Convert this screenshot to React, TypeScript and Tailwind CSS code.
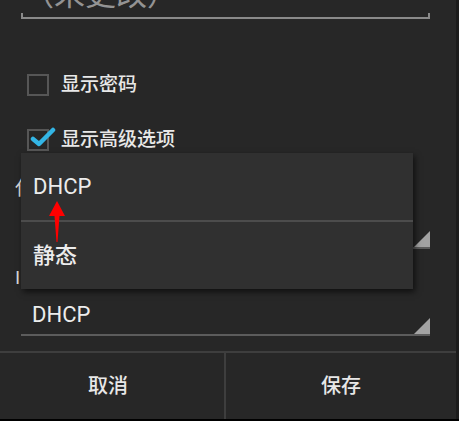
import React from "react"

const font = { fontFamily: "Roboto, 'Noto Sans CJK SC', sans-serif" }

function Checkbox({ checked, label }: { checked?: boolean; label: string }) {
  return (
    <div className="flex items-center h-[22px] pl-[27px] gap-[12px]">
      <div className="relative w-[22px] h-[22px] border-2 border-[#565656] bg-[#262626]">
        {checked && (
          <svg className="absolute left-[1px] top-[-4px]" width="26" height="22" viewBox="0 0 26 22">
            <path d="M3 12 L9 17 L23 3" fill="none" stroke="#33b5e5" strokeWidth="4.5" strokeLinecap="round" strokeLinejoin="round" />
          </svg>
        )}
      </div>
      <span className="text-[19px] leading-[24px] text-[#e8e8e8] font-medium">{label}</span>
    </div>
  )
}

function Spinner({ value, className }: { value?: string; className?: string }) {
  return (
    <div className={"relative mx-[21px] w-[409px] h-[40px] flex items-center pl-[11px] border-b-2 border-[#5c5c5c] " + (className ?? "")}>
      <span className="text-[22px] leading-[26px] text-[#ececec]">{value}</span>
      <svg className="absolute right-0 bottom-0" width="16" height="16" viewBox="0 0 16 16">
        <polygon points="16,0 16,16 0,16" fill="#a3a3a3" />
      </svg>
    </div>
  )
}

export default function App() {
  return (
    <div className="w-[459px] h-[421px] bg-black flex flex-col overflow-hidden" style={font}>
      <div className="flex h-[419px]">
        <div className="relative w-[456px] h-[419px] bg-[#272727] flex flex-col">
          {/* edit text */}
          <div className="mx-[21px] w-[409px] flex flex-col">
            <div className="mt-[-23px] h-[36px] leading-[36px] pl-[2px] text-[31px] text-[#939393] overflow-hidden">（未更改）</div>
            <div className="mt-[0px] h-[6px] border-x-2 border-b-2 border-[#8a8a8a]" />
          </div>

          <div className="mt-[55px]">
            <Checkbox label="显示密码" />
          </div>
          <div className="mt-[33px]">
            <Checkbox checked label="显示高级选项" />
          </div>

          <div className="mt-[26px] pl-[15px] h-[24px] text-[19px] leading-[24px] text-[#d8d8d8]">代理</div>
          <Spinner value="无" className="mt-[8px]" />

          <div className="mt-[17px] pl-[15px] h-[24px] text-[19px] leading-[24px] text-[#d8d8d8]">IP 设置</div>
          <Spinner value="DHCP" className="mt-[6px]" />

          {/* buttons */}
          <div className="mt-auto h-[68px] flex border-t-2 border-[#3e3e3e]">
            <button className="w-[226px] flex items-center justify-center text-[20px] text-[#e8e8e8] font-medium border-r-2 border-[#3e3e3e] pr-[8px]">取消</button>
            <button className="flex-1 flex items-center justify-center text-[20px] text-[#e8e8e8] font-medium">保存</button>
          </div>

          {/* dropdown popup */}
          <div className="absolute left-[21px] top-[153px] w-[392px] h-[136px] bg-[#303030] flex flex-col shadow-[2px_3px_6px_rgba(0,0,0,0.6)]">
            <div className="h-[67px] flex items-center pl-[12px] text-[22px] text-[#ececec]">DHCP</div>
            <div className="h-[2px] bg-[#4c4c4c]" />
            <div className="flex-1 flex items-center pl-[12px] text-[22px] text-[#ececec] font-medium">静态</div>
          </div>

          {/* red annotation arrow */}
          <svg className="absolute left-[48px] top-[199px]" width="18" height="45" viewBox="0 0 18 45">
            <polygon points="9,2 1,17 6.5,17 8.5,43 9.5,43 11.5,17 17,17" fill="#ff0000" />
          </svg>
        </div>
        <div className="w-[3px] bg-[#1c1c1c]" />
      </div>
    </div>
  )
}
